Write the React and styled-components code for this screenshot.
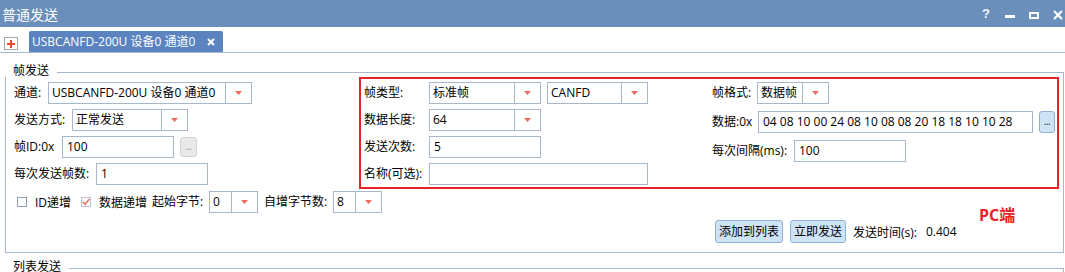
import React from 'react';
import styled, { createGlobalStyle } from 'styled-components';

const GlobalStyle = createGlobalStyle`
  html, body { margin: 0; padding: 0; background: #fff; }
  body {
    font-family: "Open Sans", "Noto Sans CJK SC", sans-serif;
    font-size: 12px;
    color: #000;
  }
  * { box-sizing: border-box; }
`;

const LINE = '#a8b7ca';

const Window = styled.div`
  width: 1065px;
  height: 272px;
  overflow: hidden;
  background: #fff;
  display: flex;
  flex-direction: column;
`;

const TitleBar = styled.div`
  height: 27px;
  flex: none;
  background: #6a8fba;
  display: flex;
  align-items: center;
  padding: 0 2px;
  color: #fff;
`;

const Title = styled.div`
  flex: 1;
  font-size: 14px;
  line-height: 16px;
  margin-top: 2px;
`;

const WinControls = styled.div`
  display: flex;
  align-items: stretch;
  gap: 14px;
  height: 100%;
`;

const HelpGlyph = styled.span`
  width: 10px;
  text-align: center;
  font-family: "Liberation Sans", sans-serif;
  font-weight: bold;
  font-size: 13px;
  line-height: 27px;
  color: #f4f8fc;
`;

const TabBar = styled.div`
  height: 26px;
  flex: none;
  border-bottom: 1px solid ${LINE};
  display: flex;
  align-items: flex-end;
  padding-left: 4px;
  gap: 11px;
`;

const AddTab = styled.div`
  width: 14px;
  height: 13px;
  margin-bottom: 2px;
  border: 1px solid #a9a9a9;
  background: #fff;
  display: flex;
  align-items: center;
  justify-content: center;
`;

const Tab = styled.div`
  width: 194px;
  height: 21px;
  background: #5a83c0;
  color: #fff;
  border-radius: 2px 2px 0 0;
  display: flex;
  align-items: center;
  justify-content: space-between;
  padding: 0 8px 0 3px;
  white-space: nowrap;
  line-height: 21px;
`;

const Group = styled.div`
  flex: none;
  margin: ${p => p.$top}px 1px 0 5px;
  display: flex;
  flex-direction: column;
`;

const GroupHeader = styled.div`
  display: flex;
  height: 13px;
`;

const GroupTitle = styled.div`
  padding-left: 8px;
  line-height: 13px;
  white-space: nowrap;
`;

const GroupLine = styled.div`
  flex: 1;
  margin-left: 8px;
  margin-top: 8px;
  border-top: 1px solid ${LINE};
  border-right: 1px solid ${LINE};
`;

const GroupBody = styled.div`
  position: relative;
  border: 1px solid ${LINE};
  border-top: none;
  padding: 0 0 9px 8px;
`;

const TopSection = styled.div`
  display: flex;
  align-items: flex-start;
`;

const LeftCol = styled.div`
  width: 345px;
  margin-top: 5px;
  display: flex;
  flex-direction: column;
  gap: 5px;
`;

const HighlightBox = styled.div`
  width: 700px;
  border: 2px solid #e8212b;
  padding: 3px 2px 2px 3px;
  display: flex;
`;

const Column = styled.div`
  width: ${p => (p.$w ? `${p.$w}px` : 'auto')};
  display: flex;
  flex-direction: column;
  gap: ${p => p.$gap}px;
`;

const Row = styled.div`
  display: flex;
  align-items: center;
  height: 22px;
  gap: ${p => p.$gap || 0}px;
`;

const Label = styled.span`
  flex: none;
  width: ${p => p.$w}px;
  padding-left: ${p => p.$pl || 0}px;
  white-space: nowrap;
  line-height: 22px;
`;

const Combo = styled.div`
  flex: none;
  width: ${p => p.$w}px;
  height: 22px;
  border: 1px solid ${LINE};
  background: #fff;
  display: flex;
`;

const ComboText = styled.span`
  flex: 1;
  padding-left: 3px;
  line-height: 20px;
  white-space: nowrap;
  overflow: hidden;
`;

const ComboArrow = styled.span`
  width: 26px;
  flex: none;
  border-left: 1px solid ${LINE};
  display: flex;
  align-items: center;
  justify-content: center;
`;

const TextBox = styled.div`
  flex: none;
  width: ${p => p.$w}px;
  height: 22px;
  border: 1px solid ${LINE};
  background: #fff;
  padding-left: 4px;
  line-height: 20px;
  white-space: nowrap;
  overflow: hidden;
`;

const DotsButton = styled.div`
  flex: none;
  width: ${p => p.$w}px;
  height: ${p => p.$h}px;
  border-radius: 3px;
  border: 1px solid ${p => (p.$disabled ? '#d2d2d2' : '#8fb1d7')};
  background: ${p => (p.$disabled ? '#e9e9e9' : '#cfe3f7')};
  color: ${p => (p.$disabled ? '#a0a0a0' : '#1a1a1a')};
  font-size: 10px;
  line-height: ${p => p.$h - 4}px;
  text-align: center;
  letter-spacing: -0.5px;
`;

const OptionRow = styled.div`
  margin-top: 2px;
  height: 22px;
  display: flex;
  align-items: center;
  padding-left: 3px;
`;

const CheckItem = styled.div`
  flex: none;
  width: ${p => p.$w}px;
  display: flex;
  align-items: center;
  gap: 8px;
  white-space: nowrap;
`;

const CheckBox = styled.span`
  width: 10px;
  height: 10px;
  flex: none;
  border: 1px solid ${p => (p.$checked ? '#b9c4d0' : '#8f9db0')};
  background: #fff;
  display: flex;
  align-items: center;
  justify-content: center;
`;

const ActionRow = styled.div`
  margin-top: 7px;
  margin-left: 701px;
  display: flex;
  align-items: center;
  gap: 7px;
  height: 23px;
`;

const ActionButton = styled.div`
  height: 23px;
  padding: 0 3px;
  border: 1px solid #8fb1d7;
  border-radius: 3px;
  background: #cfe3f7;
  line-height: 21px;
  white-space: nowrap;
`;

const Status = styled.div`
  display: flex;
  gap: 9px;
  white-space: nowrap;
`;

const Annotation = styled.div`
  position: absolute;
  left: 973px;
  top: 129px;
  color: #e8212b;
  font-weight: bold;
  font-size: 16px;
  line-height: 18px;
  white-space: nowrap;
`;

const Arrow = () => (
  <svg width="7" height="4" viewBox="0 0 7 4">
    <polygon points="0,0 7,0 3.5,4" fill="#f26a5a" />
  </svg>
);

const Select = ({ w, children }) => (
  <Combo $w={w}>
    <ComboText>{children}</ComboText>
    <ComboArrow><Arrow /></ComboArrow>
  </Combo>
);

const Check = ({ checked }) => (
  <CheckBox $checked={checked}>
    {checked && (
      <svg width="8" height="8" viewBox="0 0 8 8">
        <polyline points="0.8,3.8 3,6.3 7.4,1" fill="none" stroke="#f0705f" strokeWidth="1.5" />
      </svg>
    )}
  </CheckBox>
);

export default function App() {
  return (
    <>
      <GlobalStyle />
      <Window>
        <TitleBar>
          <Title>普通发送</Title>
          <WinControls>
            <HelpGlyph>?</HelpGlyph>
            <svg width="10" height="27" viewBox="0 0 10 27">
              <rect x="0" y="15" width="10" height="3" fill="#fff" />
            </svg>
            <svg width="10" height="27" viewBox="0 0 10 27">
              <rect x="1" y="13" width="8" height="5" fill="none" stroke="#fff" strokeWidth="2" />
            </svg>
            <svg width="10" height="27" viewBox="0 0 10 27">
              <path d="M1 11 L9 19 M9 11 L1 19" stroke="#fff" strokeWidth="2.2" />
            </svg>
          </WinControls>
        </TitleBar>

        <TabBar>
          <AddTab>
            <svg width="8" height="8" viewBox="0 0 8 8">
              <path d="M4 0 V8 M0 4 H8" stroke="#ec4a32" strokeWidth="2" />
            </svg>
          </AddTab>
          <Tab>
            <span>USBCANFD-200U 设备0 通道0</span>
            <svg width="8" height="8" viewBox="0 0 8 8">
              <path d="M1 1 L7 7 M7 1 L1 7" stroke="#fff" strokeWidth="2" />
            </svg>
          </Tab>
        </TabBar>

        <Group $top={11}>
          <GroupHeader>
            <GroupTitle>帧发送</GroupTitle>
            <GroupLine />
          </GroupHeader>
          <GroupBody>
            <TopSection>
              <LeftCol>
                <Row>
                  <Label $w={34}>通道:</Label>
                  <Select w={204}>USBCANFD-200U 设备0 通道0</Select>
                </Row>
                <Row>
                  <Label $w={58}>发送方式:</Label>
                  <Select w={116}>正常发送</Select>
                </Row>
                <Row $gap={6}>
                  <Label $w={42}>帧ID:0x</Label>
                  <TextBox $w={112}>100</TextBox>
                  <DotsButton $w={17} $h={20} $disabled>...</DotsButton>
                </Row>
                <Row>
                  <Label $w={82}>每次发送帧数:</Label>
                  <TextBox $w={112}>1</TextBox>
                </Row>
              </LeftCol>

              <HighlightBox>
                <Column $w={348} $gap={5}>
                  <Row $gap={6}>
                    <Label $w={59}>帧类型:</Label>
                    <Select w={112}>标准帧</Select>
                    <Select w={101}>CANFD</Select>
                  </Row>
                  <Row>
                    <Label $w={65}>数据长度:</Label>
                    <Select w={112}>64</Select>
                  </Row>
                  <Row>
                    <Label $w={65}>发送次数:</Label>
                    <TextBox $w={112}>5</TextBox>
                  </Row>
                  <Row>
                    <Label $w={65}>名称(可选):</Label>
                    <TextBox $w={219}></TextBox>
                  </Row>
                </Column>
                <Column $gap={7}>
                  <Row>
                    <Label $w={45}>帧格式:</Label>
                    <Select w={72}>数据帧</Select>
                  </Row>
                  <Row $gap={6}>
                    <Label $w={40}>数据:0x</Label>
                    <TextBox $w={275}>04 08 10 00 24 08 10 08 08 20 18 18 10 10 28</TextBox>
                    <DotsButton $w={16} $h={22}>...</DotsButton>
                  </Row>
                  <Row>
                    <Label $w={82}>每次间隔(ms):</Label>
                    <TextBox $w={112}>100</TextBox>
                  </Row>
                </Column>
              </HighlightBox>
            </TopSection>

            <OptionRow>
              <CheckItem $w={64}>
                <Check />
                <span>ID递增</span>
              </CheckItem>
              <CheckItem $w={71}>
                <Check checked />
                <span>数据递增</span>
              </CheckItem>
              <Label $w={57}>起始字节:</Label>
              <Select w={49}>0</Select>
              <Label $w={75} $pl={6}>自增字节数:</Label>
              <Select w={49}>8</Select>
            </OptionRow>

            <ActionRow>
              <ActionButton>添加到列表</ActionButton>
              <ActionButton>立即发送</ActionButton>
              <Status>
                <span>发送时间(s):</span>
                <span>0.404</span>
              </Status>
            </ActionRow>

            <Annotation>PC端</Annotation>
          </GroupBody>
        </Group>

        <Group $top={7}>
          <GroupHeader>
            <GroupTitle>列表发送</GroupTitle>
            <GroupLine />
          </GroupHeader>
        </Group>
      </Window>
    </>
  );
}
